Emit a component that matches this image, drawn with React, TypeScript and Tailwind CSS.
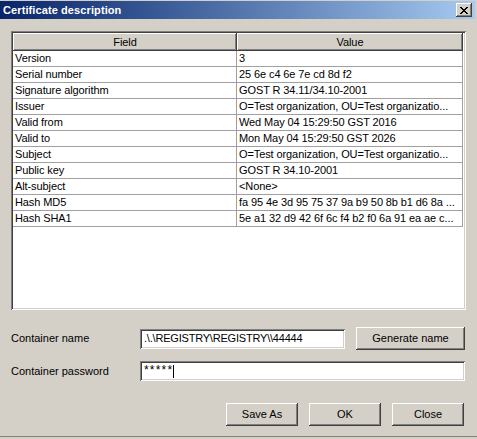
import React from "react";

const rows: [string, string][] = [
  ["Version", "3"],
  ["Serial number", "25 6e c4 6e 7e cd 8d f2"],
  ["Signature algorithm", "GOST R 34.11/34.10-2001"],
  ["Issuer", "O=Test organization, OU=Test organizatio..."],
  ["Valid from", "Wed May 04 15:29:50 GST 2016"],
  ["Valid to", "Mon May 04 15:29:50 GST 2026"],
  ["Subject", "O=Test organization, OU=Test organizatio..."],
  ["Public key", "GOST R 34.10-2001"],
  ["Alt-subject", "<None>"],
  ["Hash MD5", "fa 95 4e 3d 95 75 37 9a b9 50 8b b1 d6 8a ..."],
  ["Hash SHA1", "5e a1 32 d9 42 6f 6c f4 b2 f0 6a 91 ea ae c..."],
];

const raised =
  "bg-[#d4d0c8] shadow-[inset_-1px_-1px_#404040,inset_1px_1px_#ffffff,inset_-2px_-2px_#808080,inset_2px_2px_#d4d0c8]";
const sunken =
  "bg-white shadow-[inset_1px_1px_#808080,inset_-1px_-1px_#ffffff,inset_2px_2px_#404040,inset_-2px_-2px_#d4d0c8]";

function CloseGlyph() {
  const px: [number, number][] = [];
  const pattern = [
    "XX....XX",
    ".XX..XX.",
    "..XXXX..",
    "...XX...",
    "..XXXX..",
    ".XX..XX.",
    "XX....XX",
  ];
  pattern.forEach((r, y) =>
    r.split("").forEach((c, x) => {
      if (c === "X") px.push([x, y]);
    })
  );
  return (
    <svg width="8" height="7" viewBox="0 0 8 7" shapeRendering="crispEdges">
      {px.map(([x, y]) => (
        <rect key={`${x}-${y}`} x={x} y={y} width="1" height="1" fill="#000" />
      ))}
    </svg>
  );
}

export default function App() {
  return (
    <div
      className="w-[477px] h-[439px] bg-[#d4d0c8] text-[11px] text-black leading-none overflow-hidden"
      style={{ fontFamily: '"Liberation Sans", Arial, sans-serif' }}
    >
      <div className="h-[437px] border-b border-[#808080] flex flex-col pt-px">
        {/* Title bar */}
        <div className="h-[18px] w-[475px] bg-gradient-to-r from-[#0a246a] to-[#a6caf0] flex items-center justify-between pl-[3px] pr-[3px]">
          <span className="text-white font-bold text-[11px] tracking-[0.1px]">
            Certificate description
          </span>
          <div className={`w-[16px] h-[14px] flex items-center justify-center pt-px ${raised}`}>
            <CloseGlyph />
          </div>
        </div>

        {/* Table frame */}
        <div className={`mt-[12px] ml-[11px] w-[455px] h-[279px] p-[2px] ${sunken}`}>
          <div className="w-full h-full bg-white overflow-hidden tracking-[-0.1px]">
            <div className="flex h-[18px]">
              <div className={`w-[224px] h-full flex items-center justify-center ${raised}`}>
                Field
              </div>
              <div className={`w-[226px] h-full flex items-center justify-center ${raised}`}>
                Value
              </div>
            </div>
            {rows.map(([f, v]) => (
              <div key={f} className="flex h-[16px]">
                <div className="w-[224px] h-full border-b border-r border-[#a0a0a0] pl-[2px] flex items-center whitespace-nowrap overflow-hidden">
                  {f}
                </div>
                <div className="w-[226px] h-full border-b border-r border-[#a0a0a0] pl-[2px] flex items-center whitespace-nowrap overflow-hidden">
                  {v}
                </div>
              </div>
            ))}
          </div>
        </div>

        {/* Container name */}
        <div className="mt-[17px] flex items-center h-[23px] pl-[11px]">
          <div className="w-[129px]">Container name</div>
          <div className={`w-[205px] h-[20px] flex items-center pl-[4px] tracking-[-0.2px] ${sunken}`}>
            .\.\REGISTRY\REGISTRY\\44444
          </div>
          <div className={`ml-[11px] w-[109px] h-[23px] flex items-center justify-center ${raised}`}>
            Generate name
          </div>
        </div>

        {/* Container password */}
        <div className="mt-[11px] flex items-center h-[20px] pl-[11px]">
          <div className="w-[129px]">Container password</div>
          <div className={`w-[325px] h-[20px] flex items-center pl-[4px] ${sunken}`}>
            <span className="text-[12px] tracking-[1.2px] -mt-[3px]">*****</span>
            <span className="w-px h-[13px] bg-black"></span>
          </div>
        </div>

        {/* Buttons */}
        <div className="mt-[22px] flex justify-end gap-[11px] pr-[13px]">
          <div className={`w-[72px] h-[23px] flex items-center justify-center ${raised}`}>
            Save As
          </div>
          <div className={`w-[72px] h-[23px] flex items-center justify-center ${raised}`}>
            OK
          </div>
          <div className={`w-[72px] h-[23px] flex items-center justify-center ${raised}`}>
            Close
          </div>
        </div>
      </div>
    </div>
  );
}
